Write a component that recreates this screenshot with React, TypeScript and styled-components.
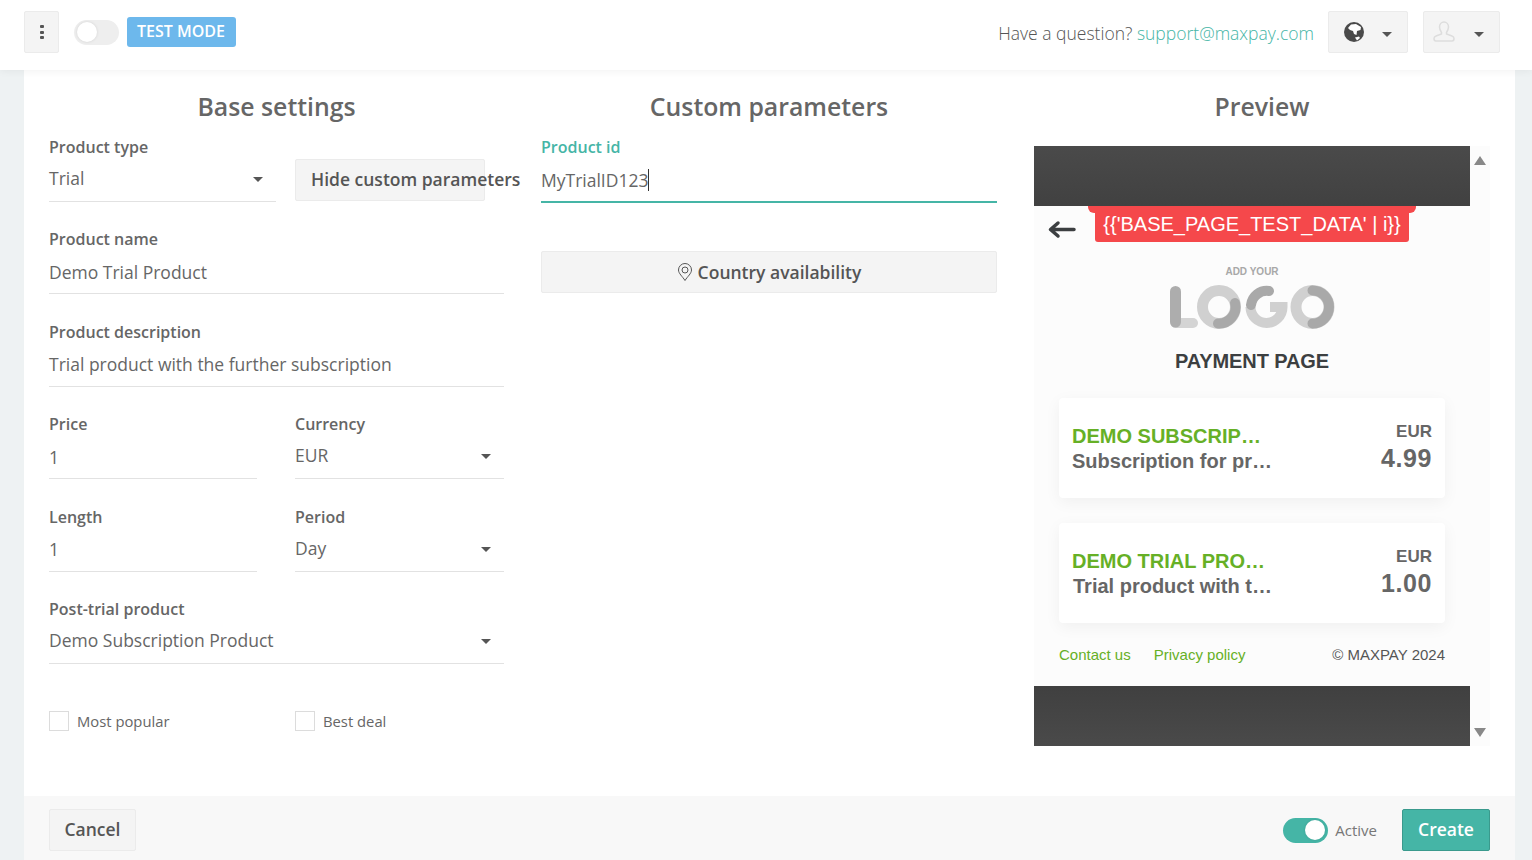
import React from "react";
import styled, { createGlobalStyle } from "styled-components";

const Global = createGlobalStyle`
  html, body { margin: 0; padding: 0; height: 860px; overflow: hidden; background: #eef2f3; }
  body { font-family: "Open Sans", "Liberation Sans", sans-serif; color: #666; }
  *, *::before, *::after { box-sizing: border-box; }
`;

const Page = styled.div`
  width: 1532px;
  height: 860px;
  display: flex;
  flex-direction: column;
  overflow: hidden;
`;
const Header = styled.header`
  height: 70px;
  flex: none;
  background: #fff;
  box-shadow: 0 1px 8px rgba(0, 0, 0, 0.06);
  position: relative;
  z-index: 2;
  display: flex;
  align-items: center;
  padding: 0 32px 6px 24px;
`;
const GreyButton = styled.button<{ $w: number; $h?: number }>`
  width: ${(p) => p.$w}px;
  height: ${(p) => p.$h ?? 42}px;
  flex: none;
  background: #f4f4f4;
  border: 1px solid #ebebeb;
  border-radius: 2px;
  padding: 0;
  display: flex;
  align-items: center;
  justify-content: center;
  font-family: inherit;
`;
const Dots = styled.span`
  display: flex;
  flex-direction: column;
  gap: 2.5px;
  i { display: block; width: 4px; height: 3px; background: #555; border-radius: 1px; }
`;
const Switch = styled.span<{ $on?: boolean }>`
  width: 45px;
  height: 25px;
  flex: none;
  border-radius: 13px;
  background: ${(p) => (p.$on ? "#45b5a6" : "#eeeeee")};
  display: flex;
  align-items: center;
  justify-content: ${(p) => (p.$on ? "flex-end" : "flex-start")};
  padding: 0 3px;
  &::after {
    content: "";
    width: 20px;
    height: 20px;
    border-radius: 50%;
    background: #fff;
    box-shadow: 0 0 3px rgba(0, 0, 0, 0.12);
  }
`;
const TestBadge = styled.span`
  margin-left: 8px;
  width: 109px;
  height: 30px;
  background: #6db8ec;
  color: #fff;
  font-size: 16px;
  font-weight: 600;
  border-radius: 3px;
  padding: 0 1px 2px 0;
  display: flex;
  align-items: center;
  justify-content: center;
  white-space: nowrap;
`;
const HeaderLeft = styled.div`
  display: flex;
  align-items: center;
  gap: 15px;
`;
const HeaderRight = styled.div`
  margin-left: auto;
  display: flex;
  align-items: center;
`;
const Question = styled.span`
  font-size: 17.5px;
  font-weight: 300;
  color: #555;
  margin: 1px 14px 0 0;
  white-space: nowrap;
  a { color: #45b5a6; text-decoration: none; }
`;
const Caret = styled.span`
  display: inline-block;
  flex: none;
  width: 0;
  height: 0;
  border-left: 5px solid transparent;
  border-right: 5px solid transparent;
  border-top: 5px solid #555;
`;
const HeaderCaret = styled(Caret)`
  margin-top: 4px;
`;
const IconButton = styled(GreyButton)<{ $pl: number; $ml?: number }>`
  justify-content: space-between;
  padding: 0 15px 0 ${(p) => p.$pl}px;
  margin-left: ${(p) => p.$ml ?? 0}px;
`;
const Sheet = styled.main`
  flex: 1;
  margin: 0 17px 0 24px;
  background: #fff;
  display: flex;
  flex-direction: column;
  min-height: 0;
`;
const Columns = styled.div`
  flex: 1;
  display: grid;
  grid-template-columns: 455px 456px 456px;
  column-gap: 37px;
  padding: 19px 25px 0;
`;
const Column = styled.section`
  min-width: 0;
`;
const Title = styled.h2`
  margin: 0;
  height: 47px;
  font-size: 24.8px;
  line-height: 34px;
  font-weight: 600;
  color: #666;
  text-align: center;
`;
const FormGrid = styled.div`
  display: grid;
  grid-auto-rows: 92.5px;
  margin-top: -0.1px;
`;
const Row = styled.div<{ $cols?: string; $gap?: number }>`
  display: grid;
  grid-template-columns: ${(p) => p.$cols ?? "1fr"};
  column-gap: ${(p) => p.$gap ?? 0}px;
  align-items: start;
`;
const Field = styled.div``;
const Label = styled.div<{ $active?: boolean }>`
  height: 22px;
  font-size: 16px;
  line-height: 22px;
  font-weight: 600;
  color: ${(p) => (p.$active ? "#45b5a6" : "#666")};
`;
const Value = styled.div<{ $active?: boolean }>`
  height: ${(p) => (p.$active ? 45 : 44)}px;
  display: flex;
  align-items: center;
  justify-content: space-between;
  font-size: 17.5px;
  color: #666;
  border-bottom: ${(p) => (p.$active ? "2px solid #45b5a6" : "1px solid #e2e2e2")};
  white-space: nowrap;
  padding-right: 13px;
`;
const SelectText = styled.span`
  margin-bottom: 3px;
`;
const Cursor = styled.span`
  display: inline-block;
  width: 1px;
  height: 22px;
  background: #333;
`;
const ValueText = styled.span`
  display: flex;
  align-items: center;
`;
const HideButton = styled(GreyButton)`
  margin-top: 23px;
  justify-content: flex-start;
  padding: 0 0 2px 15px;
  font-size: 17.5px;
  font-weight: 600;
  color: #555;
  white-space: nowrap;
  overflow: visible;
`;
const Checks = styled.div`
  display: grid;
  grid-template-columns: 208px 209px;
  column-gap: 38px;
  margin-top: 20px;
`;
const Check = styled.label`
  display: flex;
  align-items: center;
  gap: 8px;
  font-size: 14.8px;
  color: #666;
  height: 20px;
  &::before {
    content: "";
    width: 20px;
    height: 20px;
    border: 1px solid #dcdcdc;
    background: #fff;
  }
`;
const CountryButton = styled(GreyButton)`
  width: 100%;
  margin-top: 48px;
  gap: 5px;
  font-size: 17.5px;
  font-weight: 600;
  color: #555;
`;
const Preview = styled.div`
  height: 600px;
  margin-top: 10px;
  display: flex;
  background: #fcfcfc;
`;
const PreviewBody = styled.div`
  width: 436px;
  flex: none;
  display: flex;
  flex-direction: column;
  font-family: "Liberation Sans", Arial, sans-serif;
`;
const DarkBar = styled.div<{ $flip?: boolean }>`
  height: 60px;
  flex: none;
  background: linear-gradient(${(p) => (p.$flip ? "#404040, #4a4a4a" : "#4a4a4a, #414141")});
`;
const Scroll = styled.div`
  flex: 1;
  display: flex;
  flex-direction: column;
  justify-content: space-between;
  align-items: center;
  padding: 10px 1px 9px 0;
`;
const Tri = styled.span<{ $down?: boolean }>`
  width: 0;
  height: 0;
  border-left: 6.5px solid transparent;
  border-right: 6.5px solid transparent;
  ${(p) => (p.$down ? "border-top: 9px solid #888;" : "border-bottom: 9px solid #888;")}
`;
const TopRow = styled.div`
  height: 36px;
  display: flex;
  align-items: flex-start;
  padding-left: 14px;
`;
const Back = styled.svg`
  margin-top: 14px;
  flex: none;
`;
const RedBadge = styled.div`
  margin-left: 19px;
  width: 314px;
  height: 36px;
  background: #f5484b;
  color: #fff;
  font-size: 20px;
  border-radius: 0 0 3px 3px;
  display: flex;
  align-items: center;
  justify-content: center;
  position: relative;
  white-space: nowrap;
  &::before {
    content: "";
    position: absolute;
    left: -7px;
    right: -7px;
    top: 0;
    height: 7px;
    background: #f5484b;
    border-radius: 0 0 6px 6px;
  }
`;
const LogoWrap = styled.div`
  display: flex;
  flex-direction: column;
  align-items: center;
  gap: 7px;
  margin-top: 24px;
`;
const AddYour = styled.div`
  font-size: 10px;
  line-height: 12px;
  font-weight: 700;
  color: #a8a8a8;
`;
const PayTitle = styled.div`
  margin-top: 17px;
  text-align: center;
  font-size: 20px;
  line-height: 26px;
  font-weight: 700;
  letter-spacing: -0.1px;
  color: #3c3f41;
`;
const Cards = styled.div`
  margin: 24px 25px 0;
  display: flex;
  flex-direction: column;
  gap: 25px;
`;
const Card = styled.div`
  height: 100px;
  background: #fff;
  border-radius: 4px;
  box-shadow: 0 4px 16px rgba(0, 0, 0, 0.05);
  padding: 0 13px;
  display: flex;
  justify-content: space-between;
`;
const CardLeft = styled.div`
  padding-top: 25px;
  font-weight: 700;
`;
const CardName = styled.div`
  font-size: 20px;
  line-height: 26px;
  color: #66b026;
`;
const CardDesc = styled.div<{ $nudge?: number }>`
  font-size: 20px;
  line-height: 24px;
  color: #666;
  padding-left: ${(p) => p.$nudge ?? 0}px;
`;
const CardRight = styled.div`
  padding-top: 23px;
  text-align: right;
  font-weight: 700;
  color: #666;
`;
const Cur = styled.div`
  font-size: 17px;
  line-height: 21px;
`;
const Amount = styled.div`
  font-size: 25px;
  line-height: 32px;
  letter-spacing: 0.6px;
`;
const PreviewFoot = styled.div`
  margin: 21px 25px 0;
  height: 20px;
  display: flex;
  align-items: center;
  gap: 23px;
  font-size: 15px;
  color: #66b026;
  span:last-child { margin-left: auto; color: #555; }
`;
const Spacer = styled.div`
  flex: 1;
`;
const Footer = styled.footer`
  height: 64px;
  flex: none;
  background: #f8f8f8;
  padding: 13px 25px 0;
  display: flex;
  align-items: flex-start;
`;
const CancelButton = styled(GreyButton)`
  padding-bottom: 2px;
  font-size: 17.5px;
  font-weight: 600;
  color: #555;
`;
const FooterRight = styled.div`
  margin-left: auto;
  display: flex;
  align-items: center;
`;
const ActiveLabel = styled.span`
  margin: 0 25px 0 7px;
  font-size: 15px;
  color: #777;
`;
const CreateButton = styled(GreyButton)`
  padding-bottom: 2px;
  background: #45b5a6;
  border-color: #3a9a8d;
  color: #fff;
  font-size: 17.5px;
  font-weight: 600;
`;

const Globe = () => (
  <svg width="20" height="20" viewBox="0 0 20 20">
    <circle cx="10" cy="10" r="10" fill="#4a4a4a" />
    <path d="M4 6L7 2.500 12 2 17 5 16.500 8 13 9 12.500 13 10 12 9 9 6 8z" fill="#fff" />
    <path d="M11 15.500L15 14.500 16 16 13 18.500z" fill="#fff" />
  </svg>
);
const User = () => (
  <svg width="22" height="22" viewBox="0 0 22 22" fill="none" stroke="#dddddd" strokeWidth="1.500">
    <path d="M6.500 6a4.500 5 0 0 1 9 0c0 2.500-1 4-2 5.500V13l5.500 2c1.500.5 2 1.500 2 2.500 0 1.500-.5 2.500-2 2.500H3c-1.500 0-2-1-2-2.500 0-1 .5-2 2-2.500l5.500-2v-1.500c-1-1.500-2-3-2-5.500z" />
  </svg>
);
const Pin = () => (
  <svg width="16" height="18" viewBox="0 0 16 18" fill="none" stroke="#555" strokeWidth="1">
    <path d="M8 17.500C5.500 13.500 1.500 10.500 1.500 7a6.500 6.500 0 0 1 13 0c0 3.500-4 6.500-6.500 10.500z" />
    <circle cx="8" cy="7" r="3" />
  </svg>
);
const Logo = () => (
  <svg width="166" height="46" viewBox="0 0 166 46" fill="none" strokeLinecap="round">
    <path d="M6.500 38H24" stroke="#d4d4d4" strokeWidth="10" />
    <path d="M6.500 6.500V37" stroke="#adadad" strokeWidth="11" />
    <circle cx="50" cy="22" r="16.500" stroke="#d0d0d0" strokeWidth="11" strokeLinecap="butt" />
    <path d="M66 18A16.500 16.500 0 0 1 49 38.500" stroke="#a9a9a9" strokeWidth="10" />
    <path d="M81.500 22A16 16 0 1 0 113.500 22H101" stroke="#d0d0d0" strokeWidth="10" strokeLinecap="butt" />
    <path d="M82 20A16 16 0 0 1 100 6" stroke="#a9a9a9" strokeWidth="10" />
    <circle cx="143.500" cy="22" r="16.500" stroke="#d0d0d0" strokeWidth="11" strokeLinecap="butt" />
    <path d="M143.500 5.500A16.500 16.500 0 0 1 143.500 38.500" stroke="#a9a9a9" strokeWidth="10" />
  </svg>
);

export default function App() {
  return (
    <Page>
      <Global />
      <Header>
        <HeaderLeft>
          <GreyButton $w={35}>
            <Dots>
              <i />
              <i />
              <i />
            </Dots>
          </GreyButton>
          <Switch />
        </HeaderLeft>
        <TestBadge>TEST MODE</TestBadge>
        <HeaderRight>
          <Question>
            Have a question? <a>support@maxpay.com</a>
          </Question>
          <IconButton $w={80} $pl={15}>
            <Globe />
            <HeaderCaret />
          </IconButton>
          <IconButton $w={77} $pl={9} $ml={15}>
            <User />
            <HeaderCaret />
          </IconButton>
        </HeaderRight>
      </Header>
      <Sheet>
        <Columns>
          <Column>
            <Title>Base settings</Title>
            <FormGrid>
              <Row $cols="227px 190px" $gap={19}>
                <Field>
                  <Label>Product type</Label>
                  <Value>
                    <SelectText>Trial</SelectText>
                    <Caret />
                  </Value>
                </Field>
                <HideButton $w={190}>Hide custom parameters</HideButton>
              </Row>
              <Row>
                <Field>
                  <Label>Product name</Label>
                  <Value>Demo Trial Product</Value>
                </Field>
              </Row>
              <Row>
                <Field>
                  <Label>Product description</Label>
                  <Value>Trial product with the further subscription</Value>
                </Field>
              </Row>
              <Row $cols="208px 209px" $gap={38}>
                <Field>
                  <Label>Price</Label>
                  <Value>1</Value>
                </Field>
                <Field>
                  <Label>Currency</Label>
                  <Value>
                    <SelectText>EUR</SelectText>
                    <Caret />
                  </Value>
                </Field>
              </Row>
              <Row $cols="208px 209px" $gap={38}>
                <Field>
                  <Label>Length</Label>
                  <Value>1</Value>
                </Field>
                <Field>
                  <Label>Period</Label>
                  <Value>
                    <SelectText>Day</SelectText>
                    <Caret />
                  </Value>
                </Field>
              </Row>
              <Row>
                <Field>
                  <Label>Post-trial product</Label>
                  <Value>
                    <SelectText>Demo Subscription Product</SelectText>
                    <Caret />
                  </Value>
                </Field>
              </Row>
            </FormGrid>
            <Checks>
              <Check>Most popular</Check>
              <Check>Best deal</Check>
            </Checks>
          </Column>
          <Column>
            <Title>Custom parameters</Title>
            <Field>
              <Label $active>Product id</Label>
              <Value $active>
                <ValueText>
                  MyTrialID123
                  <Cursor />
                </ValueText>
              </Value>
            </Field>
            <CountryButton $w={456}>
              <Pin />
              Country availability
            </CountryButton>
          </Column>
          <Column>
            <Title>Preview</Title>
            <Preview>
              <PreviewBody>
                <DarkBar />
                <TopRow>
                  <Back width="28" height="20" viewBox="0 0 28 20" fill="none" stroke="#3c3f41" strokeWidth="3.500" strokeLinecap="round" strokeLinejoin="round">
                    <path d="M26 9.500H3M10 3L2.500 9.500 10 16" />
                  </Back>
                  <RedBadge>{"{{'BASE_PAGE_TEST_DATA' | i}}"}</RedBadge>
                </TopRow>
                <LogoWrap>
                  <AddYour>ADD YOUR</AddYour>
                  <Logo />
                </LogoWrap>
                <PayTitle>PAYMENT PAGE</PayTitle>
                <Cards>
                  <Card>
                    <CardLeft>
                      <CardName>DEMO SUBSCRIP…</CardName>
                      <CardDesc>Subscription for pr…</CardDesc>
                    </CardLeft>
                    <CardRight>
                      <Cur>EUR</Cur>
                      <Amount>4.99</Amount>
                    </CardRight>
                  </Card>
                  <Card>
                    <CardLeft>
                      <CardName>DEMO TRIAL PRO…</CardName>
                      <CardDesc $nudge={1}>Trial product with t…</CardDesc>
                    </CardLeft>
                    <CardRight>
                      <Cur>EUR</Cur>
                      <Amount>1.00</Amount>
                    </CardRight>
                  </Card>
                </Cards>
                <PreviewFoot>
                  <span>Contact us</span>
                  <span>Privacy policy</span>
                  <span>© MAXPAY 2024</span>
                </PreviewFoot>
                <Spacer />
                <DarkBar $flip />
              </PreviewBody>
              <Scroll>
                <Tri />
                <Tri $down />
              </Scroll>
            </Preview>
          </Column>
        </Columns>
        <Footer>
          <CancelButton $w={87}>Cancel</CancelButton>
          <FooterRight>
            <Switch $on />
            <ActiveLabel>Active</ActiveLabel>
            <CreateButton $w={88}>Create</CreateButton>
          </FooterRight>
        </Footer>
      </Sheet>
    </Page>
  );
}
